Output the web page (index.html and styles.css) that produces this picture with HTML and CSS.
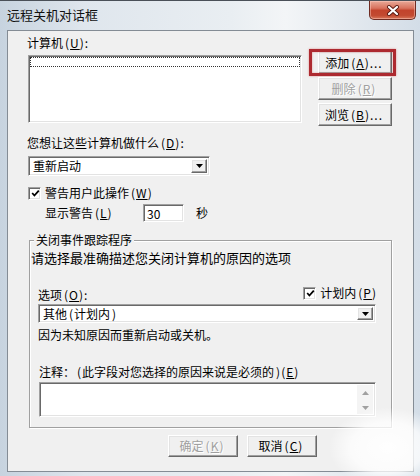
FILE: index.html
```html
<!DOCTYPE html>
<html lang="zh-CN">
<head>
<meta charset="utf-8">
<title>远程关机对话框</title>
<link rel="stylesheet" href="styles.css">
</head>
<body>
<div class="window">
  <div class="titlebar">
    <span class="title">远程关机对话框</span>
    <div class="close">
      <svg width="14" height="11" viewBox="0 0 14 11">
        <path d="M3 2 L11 9 M11 2 L3 9" stroke="#5a1a12" stroke-width="4" stroke-linecap="round"/>
        <path d="M3 2 L11 9 M11 2 L3 9" stroke="#ffffff" stroke-width="2.2" stroke-linecap="round"/>
      </svg>
    </div>
  </div>
  <div class="client">
    <div class="lbl l1">计算机<span class="ak">(<u>U</u>):</span></div>
    <div class="row-list">
      <div class="listbox"><div class="focus"></div></div>
      <div class="btncol">
        <div class="btn add">添加<span class="ak">(<u>A</u>)...</span><span class="redbox"></span></div>
        <div class="btn disabled">删除<span class="ak">(<u>R</u>)</span></div>
        <div class="btn">浏览<span class="ak">(<u>B</u>)...</span></div>
      </div>
    </div>
    <div class="lbl l2">您想让这些计算机做什么<span class="ak">(<u>D</u>):</span></div>
    <div class="combo combo1">
      <span class="combo-text">重新启动</span>
      <span class="combo-btn"><svg width="7" height="4" viewBox="0 0 7 4"><polygon points="0,0 7,0 3.5,4" fill="#000"/></svg></span>
    </div>
    <div class="chk-row">
      <span class="chk"><svg width="9" height="9" viewBox="0 0 9 9"><polyline points="1.2,4 3.4,6.5 7.8,1.6" fill="none" stroke="#000" stroke-width="1.8"/></svg></span>
      <span>警告用户此操作<span class="ak">(<u>W</u>)</span></span>
    </div>
    <div class="warn-row">
      <span class="warn-lbl">显示警告<span class="ak">(<u>L</u>)</span></span>
      <span class="edit">30</span>
      <span class="sec">秒</span>
    </div>
    <div class="group">
      <div class="group-title">关闭事件跟踪程序</div>
      <div class="desc">请选择最准确描述您关闭计算机的原因的选项</div>
      <div class="opt-row">
        <span>选项<span class="ak">(<u>O</u>):</span></span>
        <span class="plan">
          <span class="chk"><svg width="9" height="9" viewBox="0 0 9 9"><polyline points="1.2,4 3.4,6.5 7.8,1.6" fill="none" stroke="#000" stroke-width="1.8"/></svg></span>
          <span>计划内<span class="ak">(<u>P</u>)</span></span>
        </span>
      </div>
      <div class="combo combo2">
        <span class="combo-text">其他<span class="ak">(</span>计划内<span class="ak">)</span></span>
        <span class="combo-btn"><svg width="7" height="4" viewBox="0 0 7 4"><polygon points="0,0 7,0 3.5,4" fill="#000"/></svg></span>
      </div>
      <div class="reason">因为未知原因而重新启动或关机。</div>
      <div class="note-lbl">注释：<span class="ak">(</span>此字段对您选择的原因来说是必须的<span class="ak">)(<u>E</u>)</span></div>
      <div class="note">
        <div class="note-area"></div>
        <div class="vscroll">
          <svg width="7" height="4" viewBox="0 0 7 4"><polygon points="0,4 7,4 3.5,0" fill="#a0a0a0"/></svg>
          <svg width="7" height="4" viewBox="0 0 7 4"><polygon points="0,0 7,0 3.5,4" fill="#a0a0a0"/></svg>
        </div>
      </div>
    </div>
    <div class="footer">
      <div class="btn disabled small">确定<span class="ak">(<u>K</u>)</span></div>
      <div class="btn small">取消<span class="ak">(<u>C</u>)</span></div>
    </div>
  </div>
  <div class="watermark"></div>
</div>
</body>
</html>
```
FILE: styles.css
```css
body {
  margin: 0;
  width: 420px;
  height: 476px;
  overflow: hidden;
  font-family: "Noto Sans CJK SC", "Noto Sans", sans-serif;
  font-size: 12px;
  color: #000;
}

u { text-decoration: underline; text-underline-offset: 1px; }

.ak {
  letter-spacing: 1px;
  margin-left: 2px;
}

.window {
  position: relative;
  width: 420px;
  height: 476px;
  display: flex;
  flex-direction: column;
  background: linear-gradient(to right, #c7d3df 0%, #dfe6ed 20%, #e9eef2 55%, #f3f5f7 68%, #e2e8ee 85%, #d3dde7 100%);
  box-shadow: inset 0 1px 0 #4a5058;
}

.titlebar {
  height: 30px;
  display: flex;
  justify-content: space-between;
  align-items: flex-start;
}

.title {
  margin: 6px 0 0 7px;
  font-size: 13px;
  line-height: 18px;
  color: #111;
}

.close {
  margin: 1px 4px 0 0;
  width: 47px;
  height: 19px;
  box-sizing: border-box;
  border: 1px solid #6e2b22;
  border-top: none;
  border-radius: 0 0 5px 5px;
  background: linear-gradient(#e9a998 0%, #d8725d 40%, #c2432c 52%, #c24a31 80%, #d8765a 100%);
  box-shadow: inset 0 0 0 1px rgba(255, 210, 200, 0.45);
  display: flex;
  align-items: center;
  justify-content: center;
}

.client {
  margin-left: 7px;
  width: 407px;
  height: 442px;
  box-sizing: border-box;
  border: 1px solid #848c95;
  background: #f0f0f0;
}

.lbl { line-height: 14px; height: 14px; }
.l1 { margin: 5px 0 0 19px; }
.l2 { margin: 10px 0 0 19px; }

.listbox,
.combo,
.edit,
.chk,
.note {
  box-sizing: border-box;
  background: #fff;
  border: 1px solid;
  border-color: #a0a0a0 #ffffff #ffffff #a0a0a0;
  box-shadow: inset 1px 1px 0 #696969, inset -1px -1px 0 #e3e3e3;
}

.btn,
.combo-btn {
  box-sizing: border-box;
  background: #f0f0f0;
  border: 1px solid;
  border-color: #ffffff #696969 #696969 #ffffff;
  box-shadow: inset -1px -1px 0 #a0a0a0, inset 1px 1px 0 #e3e3e3;
}

.row-list {
  display: flex;
  margin-top: 1px;
  padding-left: 20px;
}

.listbox {
  margin-top: 4px;
  width: 274px;
  height: 68px;
  padding: 1px;
}

.focus {
  height: 8px;
  border: 1px dotted #333;
}

.btncol {
  margin-left: 16px;
  display: flex;
  flex-direction: column;
  gap: 3px;
}

.btn {
  position: relative;
  width: 74px;
  height: 23px;
  display: flex;
  align-items: center;
  justify-content: center;
  line-height: 14px;
  padding-right: 2px;
}

.btn.disabled {
  color: #a0a0a0;
  text-shadow: 1px 1px 0 #ffffff;
}

.redbox {
  position: absolute;
  left: -10px;
  top: -3px;
  right: -5px;
  bottom: -3px;
  border: 3px solid #ad2a30;
  box-shadow: 0 0 2px rgba(210, 80, 80, 0.6), inset 0 0 2px rgba(210, 80, 80, 0.6);
}

.combo {
  display: flex;
  align-items: stretch;
  padding: 2px;
}

.combo1 {
  margin: 6px 0 0 20px;
  width: 182px;
  height: 20px;
}

.combo-text {
  flex: 1;
  line-height: 14px;
  padding-left: 2px;
}

.combo-btn {
  width: 16px;
  display: flex;
  align-items: center;
  justify-content: center;
}

.chk-row {
  margin: 10px 0 0 20px;
  display: flex;
  align-items: center;
  gap: 4px;
  height: 14px;
  line-height: 14px;
}

.chk {
  width: 13px;
  height: 13px;
  display: flex;
  align-items: center;
  justify-content: center;
  padding: 1px 0 0 1px;
}

.warn-row {
  margin: 4px 0 0 37px;
  display: flex;
  align-items: center;
  height: 18px;
  line-height: 14px;
}

.warn-lbl { width: 98px; }

.edit {
  width: 41px;
  height: 18px;
  line-height: 14px;
  padding: 2px 0 0 3px;
}

.sec { margin-left: 12px; }

.group {
  margin: 18px 0 0 21px;
  width: 363px;
  height: 188px;
  box-sizing: border-box;
  border: 1px solid #a0a0a0;
  box-shadow: inset 1px 1px 0 #ffffff, 1px 1px 0 #ffffff;
}

.group-title {
  width: fit-content;
  margin: -8px 0 0 4px;
  padding: 0 2px;
  background: #f0f0f0;
  line-height: 14px;
}

.desc {
  font-size: 13px;
  line-height: 15px;
  margin-top: 3px;
  padding-left: 1px;
}

.opt-row {
  display: flex;
  align-items: center;
  margin: 21px 0 0 8px;
  height: 14px;
  line-height: 14px;
  padding-right: 14px;
}

.opt-row > span:first-child { margin-top: 3px; }

.plan {
  margin-left: auto;
  display: flex;
  align-items: center;
  gap: 4px;
}

.combo2 {
  margin: 4px 0 0 8px;
  width: 338px;
  height: 19px;
}

.reason {
  margin: 5px 0 0 8px;
  line-height: 14px;
}

.note-lbl {
  margin: 23px 0 0 9px;
  line-height: 14px;
}

.note {
  margin: 3px 0 0 9px;
  width: 337px;
  height: 35px;
  display: flex;
  padding: 2px;
}

.note-area { flex: 1; }

.vscroll {
  width: 16px;
  background: #f4f4f4;
  display: flex;
  flex-direction: column;
  align-items: center;
  justify-content: space-between;
  padding: 6px 0 4px;
  box-sizing: border-box;
}

.footer {
  display: flex;
  gap: 9px;
  margin: 7px 0 0 160px;
}

.btn.small {
  width: 70px;
  height: 22px;
}

.watermark {
  position: absolute;
  left: 330px;
  top: 408px;
  width: 96px;
  height: 72px;
  background: radial-gradient(ellipse at 60% 55%, rgba(255,255,255,0.95) 0%, rgba(255,255,255,0.75) 45%, rgba(255,255,255,0) 72%);
  pointer-events: none;
}
```
